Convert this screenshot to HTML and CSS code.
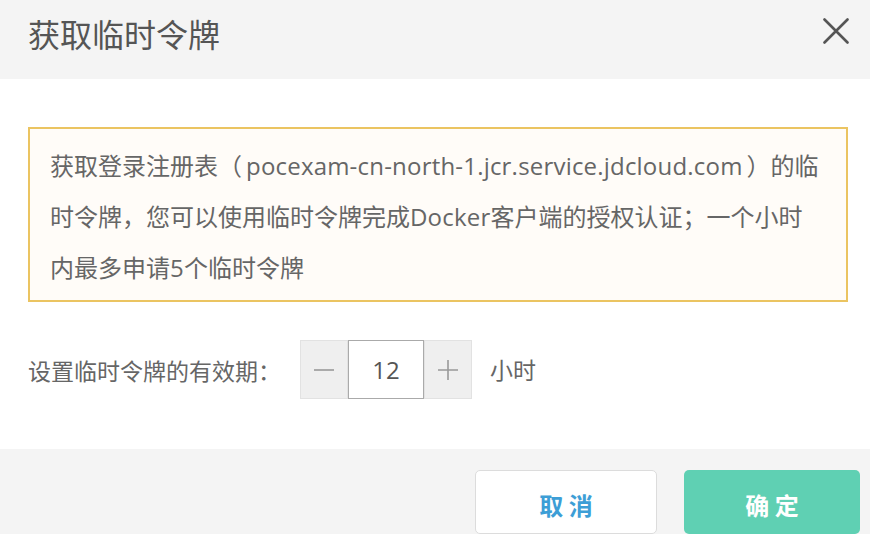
FILE: index.html
```html
<!DOCTYPE html>
<html lang="zh-CN">
<head>
<meta charset="utf-8">
<title>获取临时令牌</title>
<link rel="stylesheet" href="styles.css">
</head>
<body>
<div class="dialog">
  <div class="header">
    <h1 class="title">获取临时令牌</h1>
    <button class="close" aria-label="关闭">
      <svg width="26" height="26" viewBox="0 0 26 26"><path d="M1.5 1.5 L24.5 24.5 M24.5 1.5 L1.5 24.5" stroke="#555" stroke-width="2.6" fill="none" stroke-linecap="round"/></svg>
    </button>
  </div>
  <div class="body">
    <div class="notice">获取登录注册表<span class="po">（</span><span class="latin">pocexam-cn-north-1.jcr.service.jdcloud.com</span><span class="pc">）</span>的临<br>时令牌，您可以使用临时令牌完成<span class="latin">Docker</span>客户端的授权认证；一个小时<br>内最多申请<span class="latin">5</span>个临时令牌</div>
    <div class="row">
      <span class="label">设置临时令牌的有效期：</span>
      <div class="stepper">
        <button class="step">
          <svg width="22" height="22" viewBox="0 0 22 22"><path d="M1 11 H21" stroke="#999" stroke-width="1.6"/></svg>
        </button>
        <div class="value">12</div>
        <button class="step">
          <svg width="22" height="22" viewBox="0 0 22 22"><path d="M1 11 H21 M11 1 V21" stroke="#999" stroke-width="1.6"/></svg>
        </button>
      </div>
      <span class="unit">小时</span>
    </div>
  </div>
  <div class="footer">
    <button class="btn cancel">取 消</button>
    <button class="btn ok">确 定</button>
  </div>
</div>
</body>
</html>
```
FILE: styles.css
```css
* { box-sizing: border-box; }
html, body { margin: 0; padding: 0; background: #fff; }
body {
  font-family: "Open Sans", "Noto Sans CJK SC", sans-serif;
  color: #666;
}
.dialog {
  width: 870px;
  height: 534px;
  display: flex;
  flex-direction: column;
  overflow: hidden;
}
.header {
  height: 79px;
  flex: none;
  background: #f4f4f4;
  display: flex;
  justify-content: space-between;
  align-items: flex-start;
  padding: 11px 22px 0 28px;
}
.title {
  margin: 0;
  font-family: "Noto Sans CJK SC", sans-serif;
  font-size: 32px;
  font-weight: 400;
  line-height: 44px;
  color: #555;
}
.close {
  border: 0;
  background: none;
  padding: 0;
  margin-top: 7px;
  margin-right: -1px;
  width: 26px;
  height: 26px;
}
.body {
  flex: 1;
  padding: 48px 22px 0 28px;
}
.notice {
  border: 2px solid #ebc461;
  background: #fffcf8;
  padding: 11px 10px 7px 20px;
  font-family: "Noto Sans CJK SC", sans-serif;
  font-size: 24px;
  line-height: 50px;
  color: #666;
  white-space: nowrap;
}
.latin {
  font-family: "Open Sans", sans-serif;
  letter-spacing: 0.2px;
}
.po { margin-right: 4px; }
.pc { margin-left: 4px; }
.row {
  margin-top: 38px;
  display: flex;
  align-items: center;
  font-family: "Noto Sans CJK SC", sans-serif;
  font-size: 23px;
  color: #666;
}
.label { width: 272px; }
.stepper {
  display: flex;
  height: 59px;
}
.step {
  width: 48px;
  height: 59px;
  border: 1px solid #e2e2e2;
  background: #efefef;
  padding: 0;
  display: flex;
  align-items: center;
  justify-content: center;
}
.value {
  width: 76px;
  height: 59px;
  border: 1px solid #aaa;
  background: #fff;
  display: flex;
  align-items: center;
  justify-content: center;
  font-family: "Open Sans", sans-serif;
  font-size: 24px;
  color: #555;
}
.unit { margin-left: 18px; margin-top: -2px; }
.footer {
  height: 85px;
  flex: none;
  background: #f4f4f4;
  display: flex;
  justify-content: flex-end;
  gap: 27px;
  padding: 21px 10px 0 0;
}
.btn {
  height: 64px;
  border-radius: 5px;
  font-family: "Noto Sans CJK SC", sans-serif;
  font-size: 24px;
  font-weight: 700;
  padding: 4px 0 0 0;
}
.cancel {
  width: 182px;
  background: #fff;
  border: 1px solid #dcdcdc;
  color: #3d9ed6;
}
.ok {
  width: 176px;
  background: #5fd0b3;
  border: 0;
  color: #fff;
}
```
